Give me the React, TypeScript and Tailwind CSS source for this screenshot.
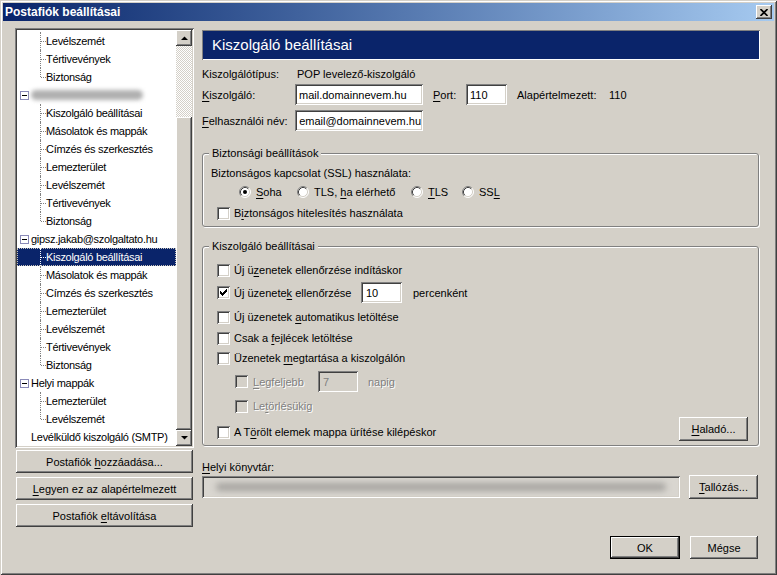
import React from 'react';

const raised = 'shadow-[inset_-1px_-1px_#404040,inset_1px_1px_#ffffff,inset_-2px_-2px_#808080,inset_2px_2px_#d4d0c8]';
const sunken = 'shadow-[inset_1px_1px_#808080,inset_-1px_-1px_#ffffff,inset_2px_2px_#404040,inset_-2px_-2px_#d4d0c8]';

type Kind = 'child' | 'last' | 'parent' | 'plain' | 'blur';
type Row = { t: string; k: Kind; sel?: boolean };

const rows: Row[] = [
  { t: 'Levélszemét', k: 'child' },
  { t: 'Tértivevények', k: 'child' },
  { t: 'Biztonság', k: 'last' },
  { t: '', k: 'blur' },
  { t: 'Kiszolgáló beállításai', k: 'child' },
  { t: 'Másolatok és mappák', k: 'child' },
  { t: 'Címzés és szerkesztés', k: 'child' },
  { t: 'Lemezterület', k: 'child' },
  { t: 'Levélszemét', k: 'child' },
  { t: 'Tértivevények', k: 'child' },
  { t: 'Biztonság', k: 'last' },
  { t: 'gipsz.jakab@szolgaltato.hu', k: 'parent' },
  { t: 'Kiszolgáló beállításai', k: 'child', sel: true },
  { t: 'Másolatok és mappák', k: 'child' },
  { t: 'Címzés és szerkesztés', k: 'child' },
  { t: 'Lemezterület', k: 'child' },
  { t: 'Levélszemét', k: 'child' },
  { t: 'Tértivevények', k: 'child' },
  { t: 'Biztonság', k: 'last' },
  { t: 'Helyi mappák', k: 'parent' },
  { t: 'Lemezterület', k: 'child' },
  { t: 'Levélszemét', k: 'last' },
  { t: 'Levélküldő kiszolgáló (SMTP)', k: 'plain' },
];

function U({ children }: { children: React.ReactNode }) {
  return <span className="underline underline-offset-[2px]">{children}</span>;
}

function Minus() {
  return (
    <span className="absolute left-[3px] top-[5px] w-[9px] h-[9px] border border-[#8a8ab8] bg-white flex items-center justify-center">
      <span className="w-[5px] h-px bg-black" />
    </span>
  );
}

function TreeRow({ r }: { r: Row }) {
  if (r.k === 'child' || r.k === 'last') {
    return (
      <div className={`relative h-[18px] flex items-center pl-[29px] whitespace-nowrap ${r.sel ? 'bg-[#0a246a] text-white' : ''}`}>
        <span className={`absolute left-[23px] top-0 w-0 border-l border-dotted ${r.sel ? 'border-white' : 'border-[#808080]'} ${r.k === 'last' ? 'h-[9px]' : 'h-[18px]'}`} />
        <span className={`absolute left-[24px] top-[9px] w-[5px] h-0 border-t border-dotted ${r.sel ? 'border-white' : 'border-[#808080]'}`} />
        {r.t}
        {r.sel && <span className="absolute inset-0 border border-dotted border-[#c8c4bc]" />}
      </div>
    );
  }
  if (r.k === 'blur') {
    return (
      <div className="relative h-[18px] flex items-center pl-[14px]">
        <Minus />
        <div className="w-[112px] h-[10px] rounded-full bg-[#b0b0b0] blur-[2px]" />
      </div>
    );
  }
  return (
    <div className="relative h-[18px] flex items-center pl-[14px] whitespace-nowrap">
      {r.k === 'parent' && <Minus />}
      {r.t}
    </div>
  );
}

function Arrow({ down }: { down?: boolean }) {
  return (
    <svg width="7" height="4" viewBox="0 0 7 4" className={down ? 'rotate-180' : ''}>
      <polygon points="0,4 3.5,0.5 7,4" fill="#000" />
    </svg>
  );
}

function Scrollbar() {
  return (
    <div className="w-[16px] flex flex-col">
      <div className={`h-[16px] bg-[#d4d0c8] ${raised} flex items-center justify-center`}>
        <Arrow />
      </div>
      <div className="h-[71px] bg-[repeating-conic-gradient(#ffffff_0%_25%,#d4d0c8_0%_50%)] bg-[length:2px_2px]" />
      <div className={`flex-1 bg-[#d4d0c8] ${raised}`} />
      <div className={`h-[16px] bg-[#d4d0c8] ${raised} flex items-center justify-center`}>
        <Arrow down />
      </div>
    </div>
  );
}

function Button({ className, children }: { className?: string; children: React.ReactNode }) {
  return (
    <div className={`bg-[#d4d0c8] ${raised} flex items-center justify-center whitespace-nowrap ${className ?? ''}`}>
      <span>{children}</span>
    </div>
  );
}

function Check({ checked, disabled }: { checked?: boolean; disabled?: boolean }) {
  const tops = [5, 6, 7, 6, 5, 4, 3];
  return (
    <span className={`relative shrink-0 w-[13px] h-[13px] ${disabled ? 'bg-[#d4d0c8]' : 'bg-white'} ${sunken}`}>
      {checked && (
        <svg width="13" height="13" className="absolute inset-0">
          {tops.map((t, i) => (
            <rect key={i} x={3 + i} y={t} width="1" height="3" fill="#000" />
          ))}
        </svg>
      )}
    </span>
  );
}

function Radio({ checked }: { checked?: boolean }) {
  return (
    <svg width="12" height="12" viewBox="0 0 12 12" className="shrink-0">
      <circle cx="6" cy="6" r="5" fill="#fff" />
      <path d="M2.11 9.89 A5.5 5.5 0 0 1 9.89 2.11" stroke="#808080" fill="none" />
      <path d="M9.89 2.11 A5.5 5.5 0 0 1 2.11 9.89" stroke="#ffffff" fill="none" />
      <path d="M2.82 9.18 A4.5 4.5 0 0 1 9.18 2.82" stroke="#404040" fill="none" />
      <path d="M9.18 2.82 A4.5 4.5 0 0 1 2.82 9.18" stroke="#d4d0c8" fill="none" />
      {checked && <circle cx="6" cy="6" r="2" fill="#000" />}
    </svg>
  );
}

function Group({ title, className, children }: { title: string; className?: string; children: React.ReactNode }) {
  return (
    <div className={`relative rounded-[3px] border border-[#808080] shadow-[inset_1px_1px_#ffffff,1px_1px_#ffffff] ${className ?? ''}`}>
      <span className="absolute -top-[8px] left-[6px] bg-[#d4d0c8] px-[3px] leading-[14px]">{title}</span>
      {children}
    </div>
  );
}

const dim = 'text-[#808080] [text-shadow:1px_1px_0_#ffffff]';

export default function App() {
  return (
    <div className="w-[777px] h-[575px] bg-[#d4d0c8] p-[3px] font-['Liberation_Sans',Arial,sans-serif] text-[11px] leading-[16px] text-black shadow-[inset_1px_1px_#d4d0c8,inset_-1px_-1px_#404040,inset_2px_2px_#ffffff,inset_-2px_-2px_#808080]">
      {/* title bar */}
      <div className="h-[18px] flex items-center justify-between pl-[2px] pr-[2px] bg-linear-to-r from-[#0a246a] to-[#a6caf0]">
        <span className="text-white font-bold text-[12px]">Postafiók beállításai</span>
        <Button className="w-[16px] h-[14px]">
          <svg width="8" height="7" viewBox="0 0 8 7" className="block">
            <path d="M0.5 0 L7.5 7 M7.5 0 L0.5 7" stroke="#000" strokeWidth="1.6" />
          </svg>
        </Button>
      </div>

      <div className="flex gap-[8px] pl-[12px] pt-[7px]">
        {/* account tree */}
        <div className="w-[179px] flex flex-col">
          <div className={`h-[420px] p-[2px] bg-white ${sunken} flex`}>
            <div className="flex-1 pt-[2px] overflow-hidden tracking-[-0.3px]">
              {rows.map((r, i) => (
                <TreeRow key={i} r={r} />
              ))}
            </div>
            <Scrollbar />
          </div>
          <div className="mt-[2px] mx-px flex flex-col gap-[4px]">
            <Button className="h-[23px]">Postafiók <U>h</U>ozzáadása...</Button>
            <Button className="h-[23px]"><U>L</U>egyen ez az alapértelmezett</Button>
            <Button className="h-[23px]">Postafiók <U>e</U>ltávolítása</Button>
          </div>
        </div>

        {/* settings page */}
        <div className="w-[558px] flex flex-col">
          <div className="mt-[2px] h-[30px] bg-[#0a246a] shadow-[inset_1px_1px_#808080,inset_-1px_-1px_#ffffff] flex items-center pl-[10px] text-white text-[15px]">
            Kiszolgáló beállításai
          </div>

          <div className="mt-[6px] h-[16px] flex">
            <span className="w-[95px]">Kiszolgálótípus:</span>
            <span>POP levelező-kiszolgáló</span>
          </div>

          <div className="mt-[2px] h-[21px] flex items-center whitespace-nowrap">
            <span className="w-[93px]"><U>K</U>iszolgáló:</span>
            <div className={`w-[128px] h-[21px] bg-white ${sunken} flex items-center pl-[4px]`}>mail.domainnevem.hu</div>
            <span className="ml-[10px] w-[33px]"><U>P</U>ort:</span>
            <div className={`w-[41px] h-[21px] bg-white ${sunken} flex items-center pl-[4px]`}>110</div>
            <span className="ml-[10px] w-[92px]">Alapértelmezett:</span>
            <span>110</span>
          </div>

          <div className="mt-[5px] h-[21px] flex items-center whitespace-nowrap">
            <span className="w-[93px]"><U>F</U>elhasználói név:</span>
            <div className={`w-[128px] h-[21px] bg-white ${sunken} flex items-center justify-end pr-[2px] overflow-hidden`}>email@domainnevem.hu</div>
          </div>

          <Group title="Biztonsági beállítások" className="mt-[22px] mr-px pt-[11px] pb-[5px] pl-[8px]">
            <div className="h-[16px]">Biztonságos kapcsolat (SSL) használata:</div>
            <div className="mt-[3px] h-[16px] flex items-center pl-[28px] whitespace-nowrap">
              <div className="w-[58px] flex items-center gap-[5px]"><Radio checked /><span><U>S</U>oha</span></div>
              <div className="w-[114px] flex items-center gap-[5px]"><Radio /><span>TLS, <U>h</U>a elérhető</span></div>
              <div className="w-[51px] flex items-center gap-[5px]"><Radio /><span><U>T</U>LS</span></div>
              <div className="flex items-center gap-[5px]"><Radio /><span>SS<U>L</U></span></div>
            </div>
            <div className="mt-[5px] h-[16px] flex items-center gap-[4px] pl-[6px]">
              <Check />
              <span>B<U>i</U>ztonságos hitelesítés használata</span>
            </div>
          </Group>

          <Group title="Kiszolgáló beállításai" className="mt-[19px] mr-px pt-[15px] pb-[4px] pl-[14px] pr-[10px]">
            <div className="h-[16px] flex items-center gap-[4px]">
              <Check />
              <span>Új ü<U>z</U>enetek ellenőrzése indításkor</span>
            </div>
            <div className="mt-[4px] h-[21px] flex items-center gap-[4px] whitespace-nowrap">
              <Check checked />
              <span className="w-[123px]">Új üzenete<U>k</U> ellenőrzése</span>
              <div className={`w-[41px] h-[21px] bg-white ${sunken} flex items-center pl-[5px]`}>10</div>
              <span className="ml-[7px]">percenként</span>
            </div>
            <div className="mt-[6px] h-[16px] flex items-center gap-[4px]">
              <Check />
              <span>Új üzenetek <U>a</U>utomatikus letöltése</span>
            </div>
            <div className="mt-[5px] h-[16px] flex items-center gap-[4px]">
              <Check />
              <span>Csak a <U>f</U>ejlécek letöltése</span>
            </div>
            <div className="mt-[4px] h-[16px] flex items-center gap-[4px]">
              <Check />
              <span>Üzenetek <U>m</U>egtartása a kiszolgálón</span>
            </div>
            <div className="mt-[5px] h-[21px] flex items-center gap-[5px] pl-[18px] whitespace-nowrap">
              <Check disabled />
              <span className={`w-[60px] ${dim}`}><U>L</U>egfeljebb</span>
              <div className={`w-[40px] h-[21px] bg-[#d4d0c8] ${sunken} flex items-center pl-[5px] text-[#808080]`}>7</div>
              <span className={`ml-[5px] ${dim}`}>napig</span>
            </div>
            <div className="mt-[6px] h-[16px] flex items-center gap-[5px] pl-[18px]">
              <Check disabled />
              <span className={dim}>Le<U>t</U>örlésükig</span>
            </div>
            <div className="mt-[3px] h-[24px] flex justify-between">
              <div className="self-end mb-px h-[16px] flex items-center gap-[4px]">
                <Check />
                <span>A T<U>ö</U>rölt elemek mappa ürítése kilépéskor</span>
              </div>
              <Button className="w-[69px] h-[24px]"><U>H</U>aladó...</Button>
            </div>
          </Group>

          <div className="mt-[13px] h-[16px]"><U>H</U>elyi könyvtár:</div>
          <div className="h-[24px] flex items-center gap-[9px] pr-[2px]">
            <div className={`flex-1 h-[22px] bg-[#d9d6d0] ${sunken} flex items-center px-[14px]`}>
              <div className="w-full h-[8px] rounded-full bg-[#a6a4a0] blur-[3px]" />
            </div>
            <Button className="w-[69px] h-[24px]"><U>T</U>allózás...</Button>
          </div>

          <div className="mt-[37px] flex justify-end gap-[10px] pr-[2px]">
            <Button className="w-[70px] h-[23px] border border-black">OK</Button>
            <Button className="w-[68px] h-[23px]">Mégse</Button>
          </div>
        </div>
      </div>
    </div>
  );
}
